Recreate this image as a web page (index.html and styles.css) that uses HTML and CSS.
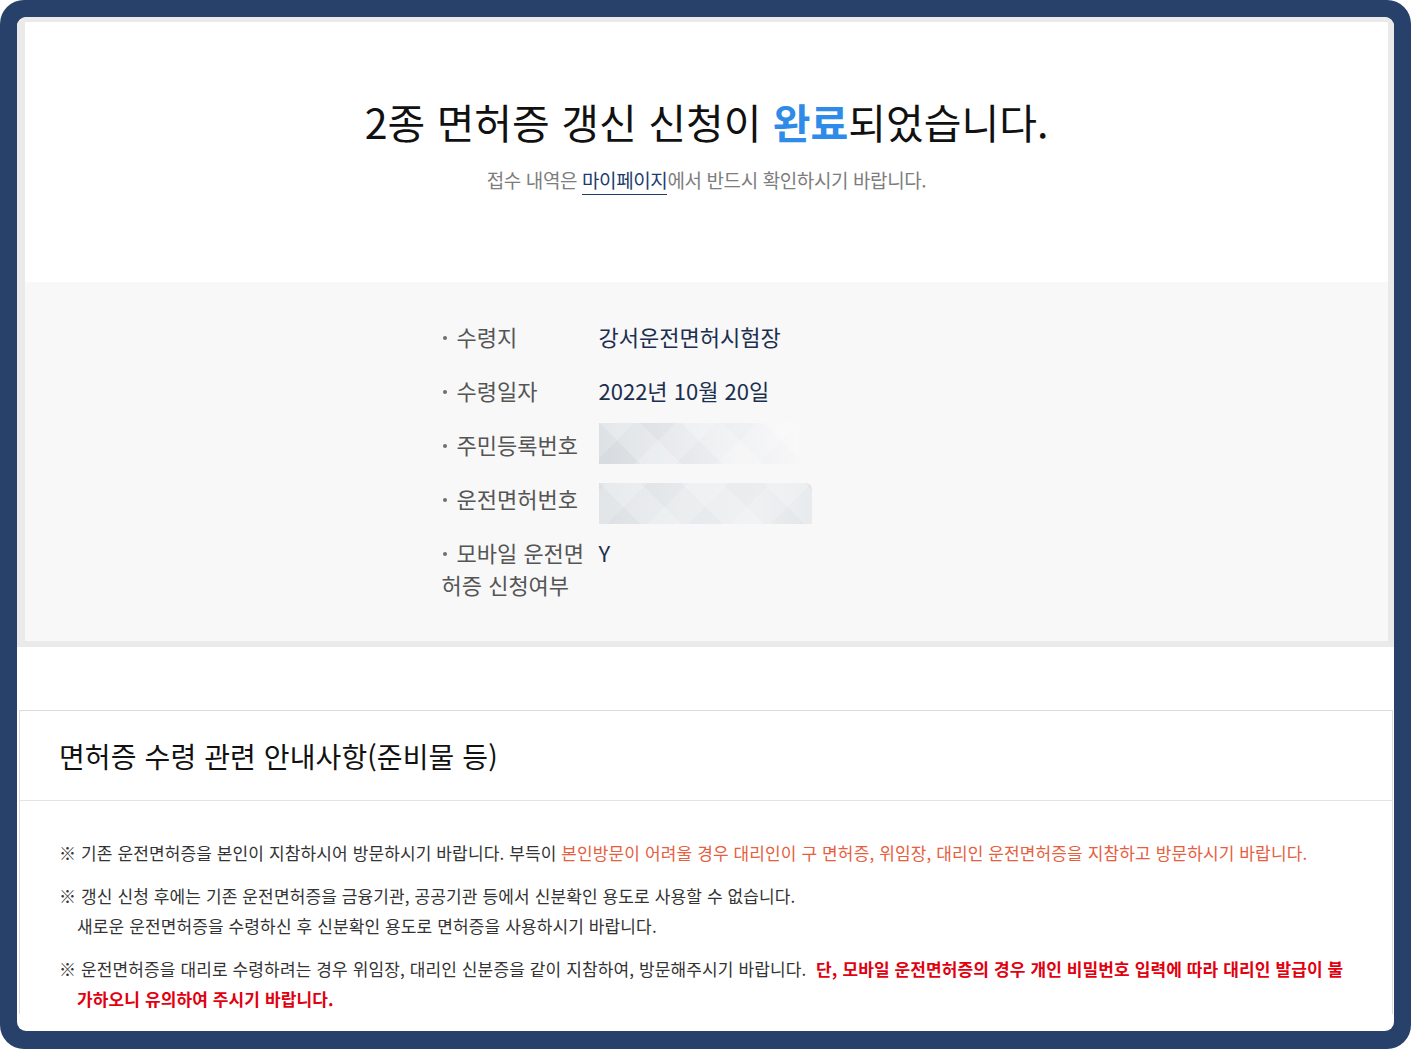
FILE: index.html
```html
<!DOCTYPE html>
<html lang="ko">
<head>
<meta charset="utf-8">
<title>2종 면허증 갱신 신청 완료</title>
<link rel="stylesheet" href="styles.css">
</head>
<body>
<div class="frame">
  <div class="panel">
    <section class="result">
      <div class="result-top">
        <h1 class="title">2종 면허증 갱신 신청이 <strong class="done">완료</strong>되었습니다.</h1>
        <p class="subtitle">접수 내역은 <a class="mypage" href="#">마이페이지</a>에서 반드시 확인하시기 바랍니다.</p>
      </div>
      <div class="result-info">
        <dl class="info-list">
          <div class="info-row">
            <dt class="info-label"><span class="dot"></span>수령지</dt>
            <dd class="info-value">강서운전면허시험장</dd>
          </div>
          <div class="info-row">
            <dt class="info-label"><span class="dot"></span>수령일자</dt>
            <dd class="info-value">2022년 10월 20일</dd>
          </div>
          <div class="info-row">
            <dt class="info-label"><span class="dot"></span>주민등록번호</dt>
            <dd class="info-value"><span class="masked masked-a"></span></dd>
          </div>
          <div class="info-row">
            <dt class="info-label"><span class="dot"></span>운전면허번호</dt>
            <dd class="info-value"><span class="masked masked-b"></span></dd>
          </div>
          <div class="info-row">
            <dt class="info-label"><span class="dot"></span>모바일 운전면허증 신청여부</dt>
            <dd class="info-value">Y</dd>
          </div>
        </dl>
      </div>
    </section>

    <section class="notice">
      <h2 class="notice-head">면허증 수령 관련 안내사항(준비물 등)</h2>
      <div class="notice-body">
        <p class="note">※ 기존 운전면허증을 본인이 지참하시어 방문하시기 바랍니다. 부득이 <span class="warn">본인방문이 어려울 경우 대리인이 구 면허증, 위임장, 대리인 운전면허증을 지참하고 방문하시기 바랍니다.</span></p>
        <p class="note">※ 갱신 신청 후에는 기존 운전면허증을 금융기관, 공공기관 등에서 신분확인 용도로 사용할 수 없습니다.<br>새로운 운전면허증을 수령하신 후 신분확인 용도로 면허증을 사용하시기 바랍니다.</p>
        <p class="note">※ 운전면허증을 대리로 수령하려는 경우 위임장, 대리인 신분증을 같이 지참하여, 방문해주시기 바랍니다.&nbsp; <strong class="alert">단, 모바일 운전면허증의 경우 개인 비밀번호 입력에 따라 대리인 발급이 불가하오니 유의하여 주시기 바랍니다.</strong></p>
      </div>
    </section>
  </div>
</div>
</body>
</html>
```

FILE: styles.css
```css
* { box-sizing: border-box; }

html, body {
  margin: 0;
  padding: 0;
  background: #ffffff;
}

body {
  font-family: "Noto Sans CJK KR", "Noto Sans KR", "Noto Sans", sans-serif;
  color: #333;
}

.frame {
  width: 1411px;
  height: 1049px;
  background: #27416a;
  border-radius: 24px;
  padding: 17px 17px 18px 17px;
  overflow: hidden;
}

.panel {
  height: 100%;
  background: #ffffff;
  border-radius: 9px;
  overflow: hidden;
}

.result {
  border-style: solid;
  border-color: #eaeaea;
  border-width: 5px 6px 6px 8px;
  border-radius: 9px 9px 0 0;
}

.result-top {
  height: 260px;
  padding-top: 71px;
  text-align: center;
  background: #ffffff;
}

.title {
  margin: 0;
  font-size: 41px;
  line-height: 56px;
  font-weight: 400;
  color: #111;
  letter-spacing: 0;
}

.done {
  color: #2e8be8;
  font-weight: 700;
}

.subtitle {
  margin: 18px 0 0;
  font-size: 19px;
  line-height: 26px;
  color: #7d7d7d;
  letter-spacing: -0.4px;
}

.mypage {
  color: #1d3b6e;
  text-decoration: none;
  border-bottom: 1px solid #1d3b6e;
  padding-bottom: 1px;
}

.result-info {
  background: #f8f8f8;
  padding: 27px 0 30px;
}

.info-list {
  width: 530px;
  margin: 0 auto;
}

.info-row {
  display: grid;
  grid-template-columns: 157px 1fr;
  padding: 11px 0;
}

.info-label {
  margin: 0;
  font-size: 22px;
  line-height: 32px;
  color: #555;
}

.dot {
  display: inline-block;
  width: 4px;
  height: 4px;
  border-radius: 50%;
  background: #6f6f6f;
  margin-right: 10px;
  margin-left: 1px;
  vertical-align: middle;
  position: relative;
  top: -2px;
}

.info-value {
  margin: 0;
  font-size: 22px;
  line-height: 32px;
  color: #1b2f4e;
  display: flex;
  align-items: flex-start;
}

.masked {
  display: block;
  height: 41px;
}

.masked-a {
  width: 200px;
  margin: -5px 0 -4px;
  background:
    repeating-linear-gradient(45deg, rgba(255,255,255,0) 0 29px, rgba(255,255,255,0.22) 29px 58px),
    repeating-linear-gradient(-45deg, rgba(255,255,255,0) 0 29px, rgba(255,255,255,0.18) 29px 58px),
    linear-gradient(to right, #d6dbdf 0%, #e3e6e9 35%, #eeeff1 65%, #f7f7f8 100%);
}

.masked-b {
  width: 213px;
  margin: 1px 0 -10px;
  border-radius: 0 6px 0 0;
  background:
    repeating-linear-gradient(45deg, rgba(255,255,255,0) 0 29px, rgba(255,255,255,0.2) 29px 58px),
    repeating-linear-gradient(-45deg, rgba(255,255,255,0) 0 29px, rgba(255,255,255,0.16) 29px 58px),
    linear-gradient(to right, #dce0e4 0%, #e7eaec 40%, #ebedef 75%, #e3e6e9 100%);
}

.notice {
  margin: 63px 1px 0 2px;
  border: 1px solid #dcdcdc;
  border-bottom: 0;
}

.notice-head {
  margin: 0;
  height: 90px;
  padding-left: 39px;
  display: flex;
  align-items: center;
  font-size: 28px;
  font-weight: 400;
  color: #111;
  letter-spacing: 0.1px;
  border-bottom: 1px solid #e3e3e3;
}

.notice-body {
  padding: 37px 40px 0 39px;
}

.note {
  margin: 0 0 13px;
  padding-left: 18px;
  text-indent: -18px;
  font-size: 17px;
  line-height: 30px;
  color: #333;
  letter-spacing: 0.12px;
}

.warn {
  color: #e5603f;
}

.alert {
  color: #e2000f;
  font-weight: 700;
}
```
